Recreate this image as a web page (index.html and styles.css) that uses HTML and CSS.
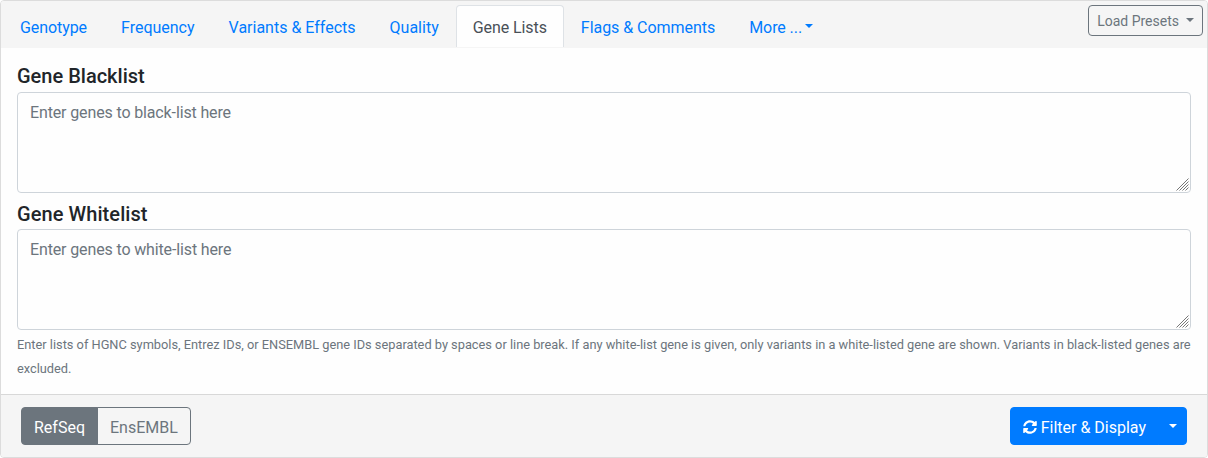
FILE: index.html
```
<!DOCTYPE html>
<html lang="en">
<head>
<meta charset="utf-8">
<title>Filter variants</title>
<link rel="stylesheet" href="styles.css">
</head>
<body>
<form class="card">
  <header class="card-header">
    <nav class="tabs">
      <a class="tab tight">Genotype</a>
      <a class="tab">Frequency</a>
      <a class="tab">Variants &amp; Effects</a>
      <a class="tab">Quality</a>
      <a class="tab active tight">Gene Lists</a>
      <a class="tab snug">Flags &amp; Comments</a>
      <a class="tab caret more tight">More ...</a>
    </nav>
    <button type="button" class="btn btn-sm caret presets">Load Presets</button>
  </header>
  <main class="card-body">
    <label class="label" for="blacklist">Gene Blacklist</label>
    <div class="field">
      <textarea class="control" id="blacklist" placeholder="Enter genes to black-list here"></textarea>
      <svg class="grip" viewBox="0 0 13 13"><path d="M0.5 12.5l12-12M3.5 12.5l9-9M6.5 12.5l6-6M9.5 12.5l3-3"/></svg>
    </div>
    <label class="label second" for="whitelist">Gene Whitelist</label>
    <div class="field">
      <textarea class="control" id="whitelist" placeholder="Enter genes to white-list here"></textarea>
      <svg class="grip" viewBox="0 0 13 13"><path d="M0.5 12.5l12-12M3.5 12.5l9-9M6.5 12.5l6-6M9.5 12.5l3-3"/></svg>
    </div>
    <p class="help">Enter lists of HGNC symbols, Entrez IDs, or ENSEMBL gene IDs separated by spaces or line break. If any white-list gene is given, only variants in a white-listed gene are shown. Variants in black-listed genes are excluded.</p>
  </main>
  <footer class="card-footer">
    <div class="group">
      <button type="button" class="btn selected">RefSeq</button>
      <button type="button" class="btn">EnsEMBL</button>
    </div>
    <div class="group">
      <button type="button" class="btn primary"><svg class="icon" viewBox="0 0 512 512"><path fill="currentColor" d="M370.72 133.28C339.458 104.008 298.888 87.962 255.848 88c-77.458.068-144.328 53.178-162.791 126.85-1.344 5.363-6.122 9.15-11.651 9.15H24.103c-7.498 0-13.194-6.807-11.807-14.176C33.933 94.924 134.813 8 256 8c66.448 0 126.791 26.136 171.315 68.685L463.03 40.97C478.149 25.851 504 36.559 504 57.941V192c0 13.255-10.745 24-24 24H345.941c-21.382 0-32.09-25.851-16.971-40.971l41.75-41.749zM32 296h134.059c21.382 0 32.09 25.851 16.971 40.971l-41.75 41.75c31.262 29.273 71.835 45.319 114.876 45.28 77.418-.07 144.315-53.144 162.787-126.849 1.344-5.363 6.122-9.15 11.651-9.15h57.304c7.498 0 13.194 6.807 11.807 14.176C478.067 417.076 377.187 504 256 504c-66.448 0-126.791-26.136-171.315-68.685L48.97 471.03C33.851 486.149 8 475.441 8 454.059V320c0-13.255 10.745-24 24-24z"/></svg> Filter &amp; Display</button>
      <button type="button" class="btn primary caret split" aria-label="Display options"></button>
    </div>
  </footer>
</form>
</body>
</html>
```
FILE: styles.css
```
* { box-sizing: border-box; }
body {
  margin: 0;
  font: 16px/24px Roboto, sans-serif;
  color: #212529;
  background: #fff;
}
.card {
  height: 458px;
  display: flex;
  flex-direction: column;
  border: 1px solid #dcdcdc;
  border-radius: 4px;
  background: #fefefe;
  overflow: hidden;
}
.card-header {
  height: 47px;
  flex: none;
  display: flex;
  justify-content: space-between;
  align-items: flex-start;
  padding: 4px 4px 0 2px;
  background: #f5f5f5;
}
.tabs { display: flex; }
.tab {
  height: 42px;
  padding: 10px 16px 8px;
  border: 1px solid transparent;
  border-bottom: 0;
  border-radius: 4px 4px 0 0;
  color: #007bff;
  white-space: nowrap;
}
.tab.active {
  color: #495057;
  background: #fefefe;
  border-color: #dee2e6;
}
.tight { letter-spacing: -0.08px; }
.snug { letter-spacing: -0.04px; }
.caret::after {
  content: "";
  display: inline-block;
  margin-left: 4px;
  vertical-align: 4px;
  border-top: 4.8px solid;
  border-left: 4.8px solid transparent;
  border-right: 4.8px solid transparent;
}
.more::after { margin-left: 3px; vertical-align: 5px; }
.btn {
  margin: 0;
  padding: 8px 12px 4px;
  border: 1px solid #6c757d;
  border-radius: 4px;
  background: transparent;
  color: #6c757d;
  font: inherit;
  white-space: nowrap;
}
.btn-sm {
  padding: 5px 8px 3px;
  font-size: 14px;
  line-height: 21px;
}
.presets::after { margin-left: 7px; }
.card-body {
  flex: 1;
  padding: 16px 16px 0;
}
.label {
  display: block;
  margin-bottom: 4px;
  font-size: 20px;
  line-height: 24px;
  font-weight: 500;
}
.second { margin: 9px 0 3px; letter-spacing: 0.08px; }
.field { position: relative; }
.control {
  display: block;
  width: 100%;
  height: 101px;
  padding: 8px 12px;
  border: 1px solid #ced4da;
  border-radius: 4px;
  background: #fefefe;
  font: inherit;
  letter-spacing: -0.135px;
  resize: none;
}
.control::placeholder { color: #6c757d; }
.grip {
  position: absolute;
  right: 2px;
  bottom: 2px;
  width: 13px;
  height: 13px;
  fill: none;
  stroke: #777;
}
.help {
  margin: 3px 0 0;
  color: #6c757d;
  font-size: 12.8px;
  letter-spacing: -0.002px;
}
.card-footer {
  height: 63px;
  flex: none;
  display: flex;
  justify-content: space-between;
  padding: 12px 20px;
  border-top: 1px solid #d8d8d8;
  background: #f5f5f5;
}
.group { display: flex; }
.group .btn:first-child { border-radius: 4px 0 0 4px; }
.group .btn:last-child { border-radius: 0 4px 4px 0; margin-left: -1px; }
.btn.selected { background: #6c757d; color: #fff; }
.btn.primary { background: #007bff; border-color: #007bff; color: #fff; }
.icon { width: 14px; height: 14px; vertical-align: -1px; }
.group .split { padding: 8px 9.5px 4px; margin-left: 0; }
.split::after { margin-left: 0; vertical-align: 5px; }
```
